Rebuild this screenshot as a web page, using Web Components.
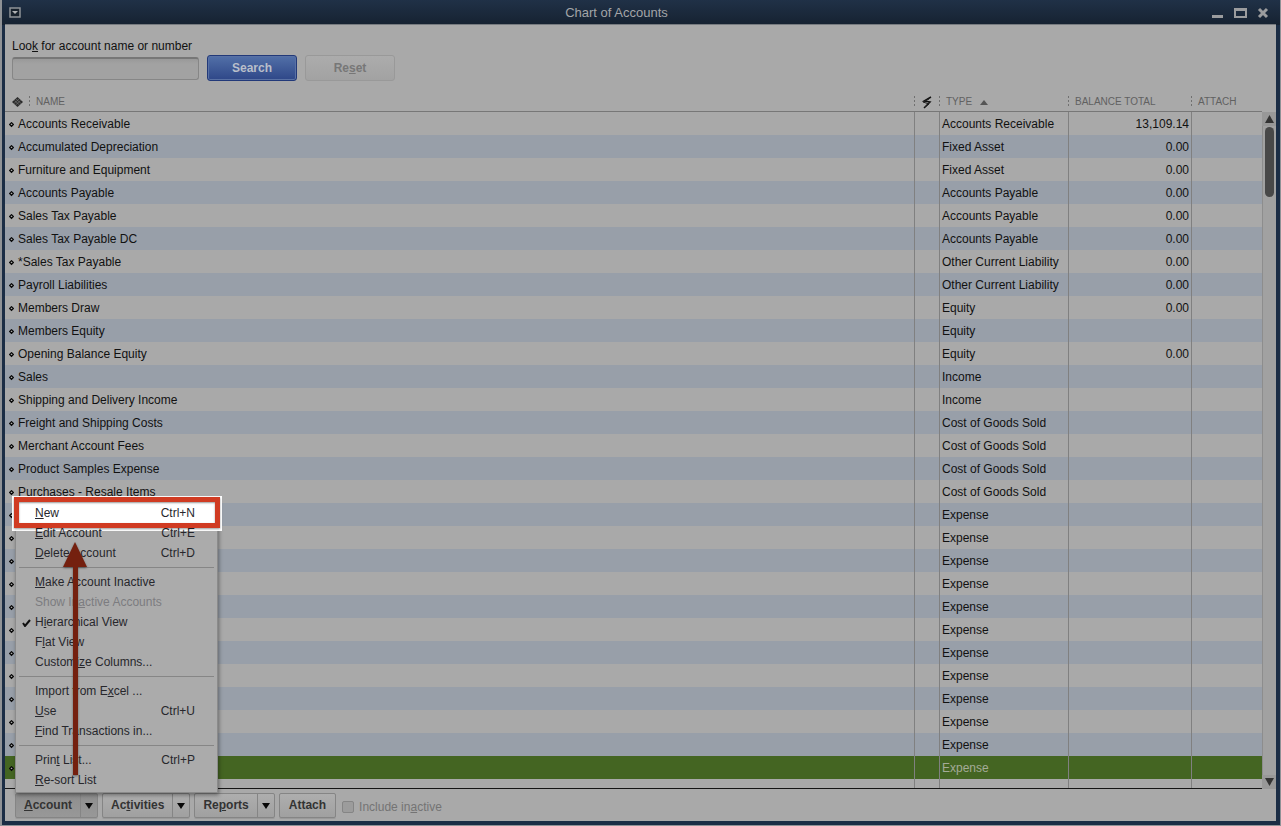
<!DOCTYPE html>
<html lang="en">
<head>
<meta charset="utf-8">
<title>Chart of Accounts</title>
<style>
  body {
    margin: 0;
    background: #8d9299;
    color: #111;
    font: 12px/20px "Liberation Sans", Arial, sans-serif;
  }
</style>
</head>
<body>
<app-window heading="Chart of Accounts">
  <account-search></account-search>
  <account-table></account-table>
  <account-toolbar></account-toolbar>
</app-window>

<script>
(function () {
  function define(name, html, setup) {
    const template = document.createElement('template');
    template.innerHTML = html;

    customElements.define(name, class extends HTMLElement {
      constructor() {
        super();
        this.attachShadow({ mode: 'open' });
        this.shadowRoot.appendChild(template.content.cloneNode(true));
      }

      connectedCallback() {
        if (setup) setup(this, this.shadowRoot);
      }
    });
  }

  define('app-window', `
    <style>
      :host {
        display: flex;
        flex-direction: column;
        box-sizing: border-box;
        min-height: 100vh;
        padding: 0 4px 4px 3px;
        background: #1b2d45;
        border: solid #8f9296;
        border-width: 0 1px 1px 2px;
      }
      header {
        display: flex;
        align-items: center;
        height: 25px;
        margin: 0 -4px 0 -3px;
        padding: 0 10px 0 6px;
        background: linear-gradient(#203147, #162231);
      }
      h1 {
        flex: 1;
        margin: 0;
        color: #a3a5a8;
        font-size: 13px;
        font-weight: normal;
        text-align: center;
      }
      button {
        display: block;
        padding: 0;
        border: 0;
        background: none;
      }
      svg { display: block; }
      .controls {
        display: flex;
        gap: 9px;
        justify-content: flex-end;
      }
      main {
        display: flex;
        flex: 1;
        flex-direction: column;
        background: #a9a9a9;
        box-shadow: 0 -1px #777b80;
      }
    </style>
    <header>
      <button aria-label="Window menu">
        <svg width="14" height="12" viewBox="0 0 14 12"><rect x="2" y="1" width="10" height="9" fill="#17212c" stroke="#8f9397" stroke-width="1.5"/><path d="M4 4h6L7 7z" fill="#b0b2b4"/></svg>
      </button>
      <h1></h1>
      <div class="controls">
        <button aria-label="Minimize"><svg width="13" height="12" viewBox="0 0 13 12"><path d="M1 8h11v3H1z" fill="#9b9c9e"/></svg></button>
        <button aria-label="Maximize"><svg width="14" height="12" viewBox="0 0 14 12"><path d="M1 1h13v10H1zM3 4v5h9V4z" fill="#9b9c9e" fill-rule="evenodd"/></svg></button>
        <button aria-label="Close"><svg width="14" height="12" viewBox="0 0 14 12"><path d="M3 2l8 8M11 2l-8 8" stroke="#9b9c9e" stroke-width="3"/></svg></button>
      </div>
    </header>
    <main><slot></slot></main>
  `, (host, root) => {
    root.querySelector('h1').textContent = host.getAttribute('heading');
  });

  define('account-search', `
    <style>
      :host {
        display: block;
        height: 55px;
        padding: 11px 7px 0;
      }
      label { display: block; }
      form {
        display: flex;
        gap: 8px;
        align-items: center;
        margin-top: -1px;
      }
      input {
        box-sizing: border-box;
        width: 187px;
        height: 23px;
        padding: 0 6px;
        border: 1px solid #868686;
        border-top: 2px solid #777;
        border-radius: 3px;
        background: linear-gradient(#999, #a2a2a2 5px);
        font: inherit;
      }
      button {
        width: 90px;
        height: 26px;
        padding: 0;
        border: 1px solid #999;
        border-radius: 3px;
        background: linear-gradient(#acacac, #a2a2a2);
        color: #777;
        font: bold 12px "Liberation Sans", Arial, sans-serif;
      }
      .primary {
        border-color: #223979;
        background: linear-gradient(#5270a8, #2e4788);
        box-shadow: inset 0 0 0 1px #5971a4;
        color: #b9bfca;
      }
    </style>
    <label for="query">Loo<u>k</u> for account name or number</label>
    <form onsubmit="return false">
      <input id="query" type="text">
      <button class="primary">Search</button>
      <button type="reset" disabled>Re<u>s</u>et</button>
    </form>
  `);

  const accounts = [
    ['Accounts Receivable', 'Accounts Receivable', '13,109.14'],
    ['Accumulated Depreciation', 'Fixed Asset', '0.00'],
    ['Furniture and Equipment', 'Fixed Asset', '0.00'],
    ['Accounts Payable', 'Accounts Payable', '0.00'],
    ['Sales Tax Payable', 'Accounts Payable', '0.00'],
    ['Sales Tax Payable DC', 'Accounts Payable', '0.00'],
    ['*Sales Tax Payable', 'Other Current Liability', '0.00'],
    ['Payroll Liabilities', 'Other Current Liability', '0.00'],
    ['Members Draw', 'Equity', '0.00'],
    ['Members Equity', 'Equity', ''],
    ['Opening Balance Equity', 'Equity', '0.00'],
    ['Sales', 'Income', ''],
    ['Shipping and Delivery Income', 'Income', ''],
    ['Freight and Shipping Costs', 'Cost of Goods Sold', ''],
    ['Merchant Account Fees', 'Cost of Goods Sold', ''],
    ['Product Samples Expense', 'Cost of Goods Sold', ''],
    ['Purchases - Resale Items', 'Cost of Goods Sold', ''],
  ];
  // the remaining rows sit behind the open menu
  while (accounts.length < 29) accounts.push(['', 'Expense', '']);

  define('account-table', `
    <style>
      :host {
        display: flex;
        flex: 1;
      }
      table {
        flex: 1;
        width: 0;
        border-collapse: separate;
        border-spacing: 0;
        border-bottom: 1px solid #151515;
        table-layout: fixed;
      }
      .marker { width: 24px; }
      .online { width: 25px; }
      .type { width: 129px; }
      .balance { width: 123px; }
      .attach { width: 71px; }
      th {
        box-sizing: border-box;
        height: 21px;
        padding: 2px 0 0 7px;
        border-bottom: 1px solid #777;
        background: repeating-linear-gradient(#707070 0 2px, transparent 2px 4px) 0 5px / 1px 10px no-repeat;
        color: #616161;
        font-size: 10px;
        font-weight: normal;
        line-height: 18px;
        text-align: left;
        white-space: nowrap;
      }
      th:first-child {
        background: none;
      }
      th svg { vertical-align: middle; }
      .sort { margin-left: 5px; }
      td {
        height: 23px;
        padding: 0 2px;
        line-height: 22px;
        white-space: nowrap;
      }
      td:nth-child(n+2) { border-left: 1px solid #808080; }
      td:first-child { padding-left: 4px; }
      td svg { margin-right: 4px; }
      td:nth-child(4) { text-align: right; }
      tbody tr:nth-child(even) { background: #989fa9; }
      tbody tr.selected {
        background: #446522;
        color: #a4ab98;
      }
      tbody tr.rest { background: none; }
      .rest td { height: auto; line-height: 0; }
    </style>
    <table>
      <colgroup><col class="marker"><col><col class="online"><col class="type"><col class="balance"><col class="attach"></colgroup>
      <thead>
        <tr>
          <th aria-label="Status"><svg width="11" height="10" viewBox="0 0 11 10"><path d="M5.500 0L11 5l-5.500 5L0 5z" fill="#2b2b2b"/><path d="M4 2l5 4.500M2.500 3.500l5 4.500M7 2L2 6.500M8.500 3.500l-5 4.500" stroke="#888" stroke-width=".5"/></svg></th>
          <th>NAME</th>
          <th aria-label="Online"><svg width="12" height="13" viewBox="0 0 12 13"><path d="M10 1L3 5l6 1-6 6" fill="none" stroke="#111" stroke-width="1.500"/><path d="M8 3L2 6l6 2-4 3" fill="none" stroke="#222"/></svg></th>
          <th>TYPE <svg class="sort" width="8" height="5" viewBox="0 0 8 5"><path d="M4 0l4 5H0z" fill="#555"/></svg></th>
          <th>BALANCE TOTAL</th>
          <th>ATTACH</th>
        </tr>
      </thead>
      <tbody></tbody>
    </table>
    <scroll-track></scroll-track>
  `, (host, root) => {
    const diamond = '<svg width="5" height="6" viewBox="0 0 5 6"><path d="M2.500 .7l1.800 1.800-1.800 1.800L.7 2.500z" fill="#aaa" stroke="#080808" stroke-width="1.200"/></svg>';
    const body = root.querySelector('tbody');
    accounts.forEach(([name, type, balance], i) => {
      const row = document.createElement('tr');
      if (i === accounts.length - 1) row.className = 'selected';
      row.innerHTML = `<td colspan="2">${diamond}${name}</td><td></td><td>${type}</td><td>${balance}</td><td></td>`;
      body.appendChild(row);
    });
    const rest = document.createElement('tr');
    rest.className = 'rest';
    rest.innerHTML = '<td colspan="2"></td><td></td><td></td><td></td><td></td>';
    body.appendChild(rest);
  });

  define('scroll-track', `
    <style>
      :host {
        display: flex;
        flex-direction: column;
        width: 14px;
        margin-top: 21px;
        background: #a1a1a1;
        box-shadow: inset 1px 0 #8d8d8d;
      }
      button {
        display: block;
        height: 14px;
        padding: 0;
        border: 0;
        background: #989898;
      }
      svg { display: block; margin: auto; }
      .thumb {
        width: 9px;
        height: 70px;
        margin: 1px auto auto 3px;
        border-radius: 5px;
        background: #484848;
      }
    </style>
    <button aria-label="Scroll up"><svg width="9" height="8" viewBox="0 0 9 8"><path d="M4.500 0L9 8H0z" fill="#333"/></svg></button>
    <div class="thumb"></div>
    <button aria-label="Scroll down"><svg width="9" height="8" viewBox="0 0 9 8"><path d="M0 0h9L4.500 8z" fill="#333"/></svg></button>
  `);

  define('split-button', `
    <style>
      :host {
        display: flex;
        box-sizing: border-box;
        height: 25px;
        border: 1px solid #858585;
        border-radius: 2px;
        background: linear-gradient(#aeaeae, #a0a0a0);
        box-shadow: 0 1px #999;
      }
      :host([open]) { background: linear-gradient(#8e8e8e, #989898); }
      button {
        padding: 0 8px 1px;
        border: 0;
        background: none;
        color: #333;
        font: bold 12px "Liberation Sans", Arial, sans-serif;
      }
      .arrow {
        width: 17px;
        padding: 0;
        border-left: 1px solid #858585;
      }
      :host([plain]) { padding: 0 1px; }
      :host([plain]) .arrow { display: none; }
      svg { display: block; margin: auto; }
    </style>
    <button><slot></slot></button>
    <button class="arrow" aria-label="Open menu"><svg width="8" height="6" viewBox="0 0 8 6"><path d="M0 0h8L4 6z" fill="#080808"/></svg></button>
  `);

  define('menu-item', `
    <style>
      :host {
        display: block;
        position: relative;
      }
      button {
        display: flex;
        justify-content: space-between;
        width: 100%;
        height: 20px;
        padding: 0 22px 0 19px;
        border: 0;
        background: none;
        color: #27272c;
        font: inherit;
        line-height: 20px;
        white-space: nowrap;
      }
      button:disabled { color: #7c7c80; }
      svg {
        display: none;
        position: absolute;
        left: 6px;
        top: 7px;
      }
      :host([checked]) svg { display: block; }
    </style>
    <svg width="9" height="8" viewBox="0 0 9 8"><path d="M1 4l2 3 5-6" fill="none" stroke="#111" stroke-width="2"/></svg>
    <button><span><slot></slot></span><span class="key"></span></button>
  `, (host, root) => {
    root.querySelector('.key').textContent = host.getAttribute('key');
    root.querySelector('button').disabled = host.hasAttribute('disabled');
  });

  define('account-menu', `
    <style>
      :host {
        display: block;
        box-sizing: border-box;
        width: 203px;
        padding: 3px 0 2px;
        border: 1px solid #8b8b8b;
        background: #ababab;
        box-shadow: 1px 2px 4px #0006;
      }
      hr {
        height: 1px;
        margin: 4px 3px;
        border: 0;
        background: #868686;
      }
      .spotlight, .frame, .arrow {
        position: absolute;
        pointer-events: none;
      }
      .spotlight {
        inset: -4px -5px auto -4px;
        height: 35px;
        background: #fff;
      }
      .frame {
        inset: -3px -3px auto -2px;
        box-sizing: border-box;
        height: 31px;
        border: 5px solid #d03b22;
        box-shadow: inset 0 1px 2px #0006, 0 1px 2px #0006;
      }
      .arrow {
        left: 46px;
        top: 42px;
        filter: drop-shadow(0 1px 1px #0006);
      }
    </style>
    <div class="spotlight"></div>
    <menu-item key="Ctrl+N"><u>N</u>ew</menu-item>
    <menu-item key="Ctrl+E"><u>E</u>dit Account</menu-item>
    <menu-item key="Ctrl+D"><u>D</u>elete Account</menu-item>
    <hr>
    <menu-item><u>M</u>ake Account Inactive</menu-item>
    <menu-item disabled>Show In<u>a</u>ctive Accounts</menu-item>
    <menu-item checked>H<u>i</u>erarchical View</menu-item>
    <menu-item>F<u>l</u>at View</menu-item>
    <menu-item>Custom<u>iz</u>e Columns...</menu-item>
    <hr>
    <menu-item>Import from E<u>x</u>cel ...</menu-item>
    <menu-item key="Ctrl+U"><u>U</u>se</menu-item>
    <menu-item><u>F</u>ind Transactions in...</menu-item>
    <hr>
    <menu-item key="Ctrl+P">Prin<u>t</u> List...</menu-item>
    <menu-item><u>R</u>e-sort List</menu-item>
    <div class="frame"></div>
    <svg class="arrow" width="26" height="234" viewBox="0 0 26 234"><path d="M13 0l12 25h-9v208h-5V25H1z" fill="#74200f"/></svg>
  `);

  define('account-toolbar', `
    <style>
      :host {
        display: flex;
        position: relative;
        gap: 4px;
        align-items: flex-start;
        box-sizing: border-box;
        height: 32px;
        padding: 4px 0 0 10px;
      }
      account-menu {
        position: absolute;
        left: 10px;
        bottom: 28px;
      }
      label {
        display: flex;
        gap: 5px;
        align-items: center;
        margin: 4px 0 0 2px;
        color: #747474;
      }
      input {
        width: 12px;
        height: 12px;
        margin: 0;
        border: 1px solid #858585;
        border-radius: 2px;
        background: #9c9c9c;
        appearance: none;
      }
    </style>
    <split-button open><u>A</u>ccount</split-button>
    <split-button>Ac<u>t</u>ivities</split-button>
    <split-button>Re<u>p</u>orts</split-button>
    <split-button plain>Attach</split-button>
    <label><input type="checkbox" disabled><span>Include in<u>a</u>ctive</span></label>
    <account-menu></account-menu>
  `);
}());
</script>
</body>
</html>
